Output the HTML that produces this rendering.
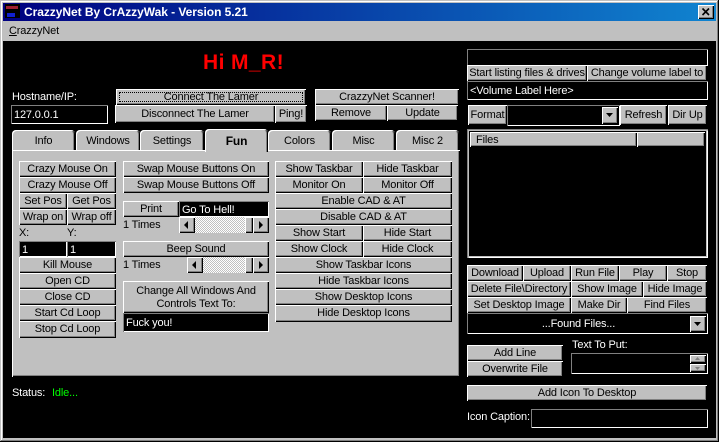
<!DOCTYPE html>
<html><head><meta charset="utf-8"><style>
html,body{margin:0;padding:0;background:#000}
#w{position:relative;width:719px;height:442px;background:#000;overflow:hidden;font:11px/15px "Liberation Sans",sans-serif;color:#000;letter-spacing:-.15px}
#w div,#w svg{position:absolute;box-sizing:border-box;white-space:nowrap}
.b{background:#c0c0c0;text-align:center;line-height:16px;box-shadow:inset 1px 1px #fff,inset -1px -1px #000,inset -2px -2px #808080}
.i{background:#000;color:#fff;padding-left:3px;line-height:18px;box-shadow:inset 1px 1px #808080,inset -1px -1px #fff}
.t{background:#c0c0c0;text-align:center;line-height:22px;border-radius:4px 4px 0 0;top:130px;height:20px;box-shadow:inset 1px 1px #fff,inset -1px 0 #000,inset -2px 0 #808080}
.l{color:#fff}
</style></head><body><div id="w">
<div style="left:0;top:0;width:719px;height:442px;border:3px solid #c0c0c0;border-bottom-width:4px;background:#000"></div>
<div style="left:0;top:0;width:719px;height:1px;background:#c0c0c0"></div>
<div style="left:1px;top:1px;width:717px;height:1px;background:#fff"></div>
<div style="left:1px;top:1px;width:1px;height:439px;background:#fff"></div>
<div style="left:718px;top:0;width:1px;height:442px;background:#000"></div>
<div style="left:717px;top:1px;width:1px;height:440px;background:#808080"></div>
<div style="left:0;top:441px;width:719px;height:1px;background:#000"></div>
<div style="left:1px;top:440px;width:717px;height:1px;background:#808080"></div>
<div style="left:3px;top:3px;width:713px;height:18px;background:linear-gradient(90deg,#000080,#1084d0)"></div>
<svg style="left:5px;top:4px" width="15" height="14"><rect width="15" height="14" fill="#000"/><rect x="1" y="2" width="12" height="3" fill="#a02030"/><rect x="2" y="9" width="8" height="4" fill="#1020d0"/></svg>
<div style="left:24px;top:4px;color:#fff;font-weight:bold;font-size:12px;line-height:16px;letter-spacing:-.05px">CrazzyNet By CrAzzyWak - Version 5.21</div>
<div class="b" style="left:698px;top:5px;width:16px;height:14px"><svg style="left:3px;top:2px" width="10" height="10"><path d="M1.5 1.5L8 8M8 1.5L1.5 8" stroke="#000" stroke-width="1.6" fill="none"/></svg></div>
<div style="left:3px;top:21px;width:713px;height:20px;background:#c0c0c0"></div>
<div style="left:9px;top:23px;line-height:17px"><u>C</u>razzyNet</div>
<div style="left:203px;top:50px;color:#f00;font-weight:bold;font-size:21px;line-height:26px;letter-spacing:.4px">Hi M_R!</div>
<div class="l" style="left:12px;top:90px">Hostname/IP:</div>
<div class="i" style="left:11px;top:105px;width:97px;height:19px;line-height:21px">127.0.0.1</div>
<div class="b" style="left:116px;top:89px;width:190px;height:16px">Connect The Lamer<div style="left:3px;top:3px;width:184px;height:10px;border:1px dotted #000"></div></div>
<div class="b" style="left:115px;top:105px;width:160px;height:18px;line-height:18px">Disconnect The Lamer</div>
<div class="b" style="left:275px;top:105px;width:32px;height:18px;line-height:18px">Ping!</div>
<div class="b" style="left:315px;top:89px;width:144px;height:16px">CrazzyNet Scanner!</div>
<div class="b" style="left:315px;top:105px;width:72px;height:16px">Remove</div>
<div class="b" style="left:387px;top:105px;width:71px;height:16px">Update</div>

<div style="left:12px;top:150px;width:448px;height:227px;background:#c0c0c0;box-shadow:inset 1px 1px #fff,inset -1px -1px #000,inset -2px -2px #808080"></div>
<div class="t" style="left:12px;width:63px">Info</div>
<div class="t" style="left:76px;width:64px">Windows</div>
<div class="t" style="left:140px;width:64px">Settings</div>
<div class="t" style="left:205px;top:129px;width:63px;height:23px;font-weight:bold;font-size:12px;line-height:24px;z-index:2">Fun</div>
<div class="t" style="left:268px;width:63px">Colors</div>
<div class="t" style="left:332px;width:63px">Misc</div>
<div class="t" style="left:396px;width:63px">Misc 2</div>

<div class="b" style="left:19px;top:161px;width:97px;height:16px">Crazy Mouse On</div>
<div class="b" style="left:19px;top:177px;width:97px;height:16px">Crazy Mouse Off</div>
<div class="b" style="left:19px;top:193px;width:48px;height:16px">Set Pos</div>
<div class="b" style="left:67px;top:193px;width:49px;height:16px">Get Pos</div>
<div class="b" style="left:19px;top:209px;width:48px;height:16px">Wrap on</div>
<div class="b" style="left:67px;top:209px;width:49px;height:16px">Wrap off</div>
<div style="left:19px;top:226px">X:</div>
<div style="left:67px;top:226px">Y:</div>
<div class="i" style="left:19px;top:241px;width:48px;height:16px">1</div>
<div class="i" style="left:67px;top:241px;width:49px;height:16px">1</div>
<div class="b" style="left:19px;top:257px;width:97px;height:16px">Kill Mouse</div>
<div class="b" style="left:19px;top:273px;width:97px;height:16px">Open CD</div>
<div class="b" style="left:19px;top:289px;width:97px;height:16px">Close CD</div>
<div class="b" style="left:19px;top:305px;width:97px;height:16px">Start Cd Loop</div>
<div class="b" style="left:19px;top:321px;width:97px;height:17px">Stop Cd Loop</div>

<div class="b" style="left:123px;top:161px;width:146px;height:16px">Swap Mouse Buttons On</div>
<div class="b" style="left:123px;top:177px;width:146px;height:16px">Swap Mouse Buttons Off</div>
<div class="b" style="left:123px;top:201px;width:56px;height:16px">Print</div>
<div class="i" style="left:179px;top:201px;width:90px;height:16px">Go To Hell!</div>
<div style="left:123px;top:218px">1 Times</div>
<div style="left:179px;top:217px;width:90px;height:16px;background:repeating-conic-gradient(#fff 0 25%,#c0c0c0 0 50%) 0 0/2px 2px"></div>
<div class="b" style="left:179px;top:217px;width:16px;height:16px"><svg style="left:5px;top:4px" width="5" height="8"><path d="M4 0V8L0 4Z" fill="#000"/></svg></div>
<div class="b" style="left:245px;top:217px;width:8px;height:16px"></div>
<div class="b" style="left:253px;top:217px;width:16px;height:16px"><svg style="left:6px;top:4px" width="5" height="8"><path d="M0 0V8L4 4Z" fill="#000"/></svg></div>
<div class="b" style="left:123px;top:241px;width:146px;height:16px">Beep Sound</div>
<div style="left:123px;top:258px">1 Times</div>
<div style="left:187px;top:257px;width:82px;height:16px;background:repeating-conic-gradient(#fff 0 25%,#c0c0c0 0 50%) 0 0/2px 2px"></div>
<div class="b" style="left:187px;top:257px;width:16px;height:16px"><svg style="left:5px;top:4px" width="5" height="8"><path d="M4 0V8L0 4Z" fill="#000"/></svg></div>
<div class="b" style="left:245px;top:257px;width:8px;height:16px"></div>
<div class="b" style="left:253px;top:257px;width:16px;height:16px"><svg style="left:6px;top:4px" width="5" height="8"><path d="M0 0V8L4 4Z" fill="#000"/></svg></div>
<div class="b" style="left:123px;top:281px;width:146px;height:32px;white-space:normal;line-height:13px;padding-top:4px">Change All Windows And<br>Controls Text To:</div>
<div class="i" style="left:123px;top:313px;width:146px;height:19px;line-height:20px">Fuck you!</div>

<div class="b" style="left:275px;top:161px;width:88px;height:16px">Show Taskbar</div>
<div class="b" style="left:363px;top:161px;width:89px;height:16px">Hide Taskbar</div>
<div class="b" style="left:275px;top:177px;width:88px;height:16px">Monitor On</div>
<div class="b" style="left:363px;top:177px;width:89px;height:16px">Monitor Off</div>
<div class="b" style="left:275px;top:193px;width:177px;height:16px">Enable CAD &amp; AT</div>
<div class="b" style="left:275px;top:209px;width:177px;height:16px">Disable CAD &amp; AT</div>
<div class="b" style="left:275px;top:225px;width:88px;height:16px">Show Start</div>
<div class="b" style="left:363px;top:225px;width:89px;height:16px">Hide Start</div>
<div class="b" style="left:275px;top:241px;width:88px;height:16px">Show Clock</div>
<div class="b" style="left:363px;top:241px;width:89px;height:16px">Hide Clock</div>
<div class="b" style="left:275px;top:257px;width:177px;height:16px">Show Taskbar Icons</div>
<div class="b" style="left:275px;top:273px;width:177px;height:16px">Hide Taskbar Icons</div>
<div class="b" style="left:275px;top:289px;width:177px;height:16px">Show Desktop Icons</div>
<div class="b" style="left:275px;top:305px;width:177px;height:17px">Hide Desktop Icons</div>

<div class="l" style="left:12px;top:386px">Status:</div>
<div style="left:52px;top:386px;color:#0f0">Idle...</div>

<div class="i" style="left:467px;top:49px;width:241px;height:17px"></div>
<div class="b" style="left:467px;top:65px;width:120px;height:16px">Start listing files &amp; drives</div>
<div class="b" style="left:587px;top:65px;width:120px;height:16px">Change volume label to</div>
<div class="i" style="left:467px;top:81px;width:241px;height:19px;line-height:20px">&lt;Volume Label Here&gt;</div>
<div class="b" style="left:468px;top:105px;width:39px;height:20px;line-height:20px">Format</div>
<div class="i" style="left:507px;top:105px;width:113px;height:21px"></div>
<div class="b" style="left:602px;top:107px;width:16px;height:17px"><svg style="left:4px;top:6px" width="8" height="5"><path d="M0 0H7L3.5 4Z" fill="#000"/></svg></div>
<div class="b" style="left:620px;top:105px;width:47px;height:20px;line-height:20px">Refresh</div>
<div class="b" style="left:668px;top:105px;width:39px;height:20px;line-height:20px">Dir Up</div>
<div style="left:467px;top:129px;width:241px;height:129px;background:#000;box-shadow:inset 1px 1px #808080,inset 2px 2px #c0c0c0,inset -1px -1px #fff,inset -2px -2px #c0c0c0"></div>
<div class="b" style="left:470px;top:132px;width:167px;height:15px;text-align:left;padding-left:6px;line-height:17px">Files</div>
<div class="b" style="left:637px;top:132px;width:68px;height:15px"></div>

<div class="b" style="left:467px;top:265px;width:56px;height:16px">Download</div>
<div class="b" style="left:523px;top:265px;width:48px;height:16px">Upload</div>
<div class="b" style="left:571px;top:265px;width:48px;height:16px">Run File</div>
<div class="b" style="left:619px;top:265px;width:48px;height:16px">Play</div>
<div class="b" style="left:667px;top:265px;width:40px;height:16px">Stop</div>
<div class="b" style="left:467px;top:281px;width:104px;height:16px">Delete File\Directory</div>
<div class="b" style="left:571px;top:281px;width:72px;height:16px">Show Image</div>
<div class="b" style="left:643px;top:281px;width:64px;height:16px">Hide Image</div>
<div class="b" style="left:467px;top:297px;width:104px;height:16px">Set Desktop Image</div>
<div class="b" style="left:571px;top:297px;width:56px;height:16px">Make Dir</div>
<div class="b" style="left:627px;top:297px;width:80px;height:16px">Find Files</div>
<div class="i" style="left:467px;top:313px;width:241px;height:21px;text-align:center;line-height:22px;padding:0 18px 0 0">...Found Files...</div>
<div class="b" style="left:690px;top:316px;width:16px;height:16px"><svg style="left:4px;top:6px" width="8" height="5"><path d="M0 0H7L3.5 4Z" fill="#000"/></svg></div>
<div class="b" style="left:467px;top:345px;width:96px;height:16px">Add Line</div>
<div class="b" style="left:467px;top:361px;width:96px;height:16px">Overwrite File</div>
<div class="l" style="left:572px;top:338px">Text To Put:</div>
<div class="i" style="left:571px;top:353px;width:137px;height:21px"></div>
<div class="b" style="left:690px;top:355px;width:16px;height:8px"><svg style="left:5px;top:2px" width="6" height="3"><path d="M0 3H5L2.5 0Z" fill="#808080"/></svg></div>
<div class="b" style="left:690px;top:364px;width:16px;height:8px"><svg style="left:5px;top:3px" width="6" height="3"><path d="M0 0H5L2.5 3Z" fill="#808080"/></svg></div>
<div class="b" style="left:467px;top:385px;width:240px;height:16px">Add Icon To Desktop</div>
<div class="l" style="left:467px;top:410px">Icon Caption:</div>
<div class="i" style="left:531px;top:409px;width:177px;height:19px"></div>
</div></body></html>
